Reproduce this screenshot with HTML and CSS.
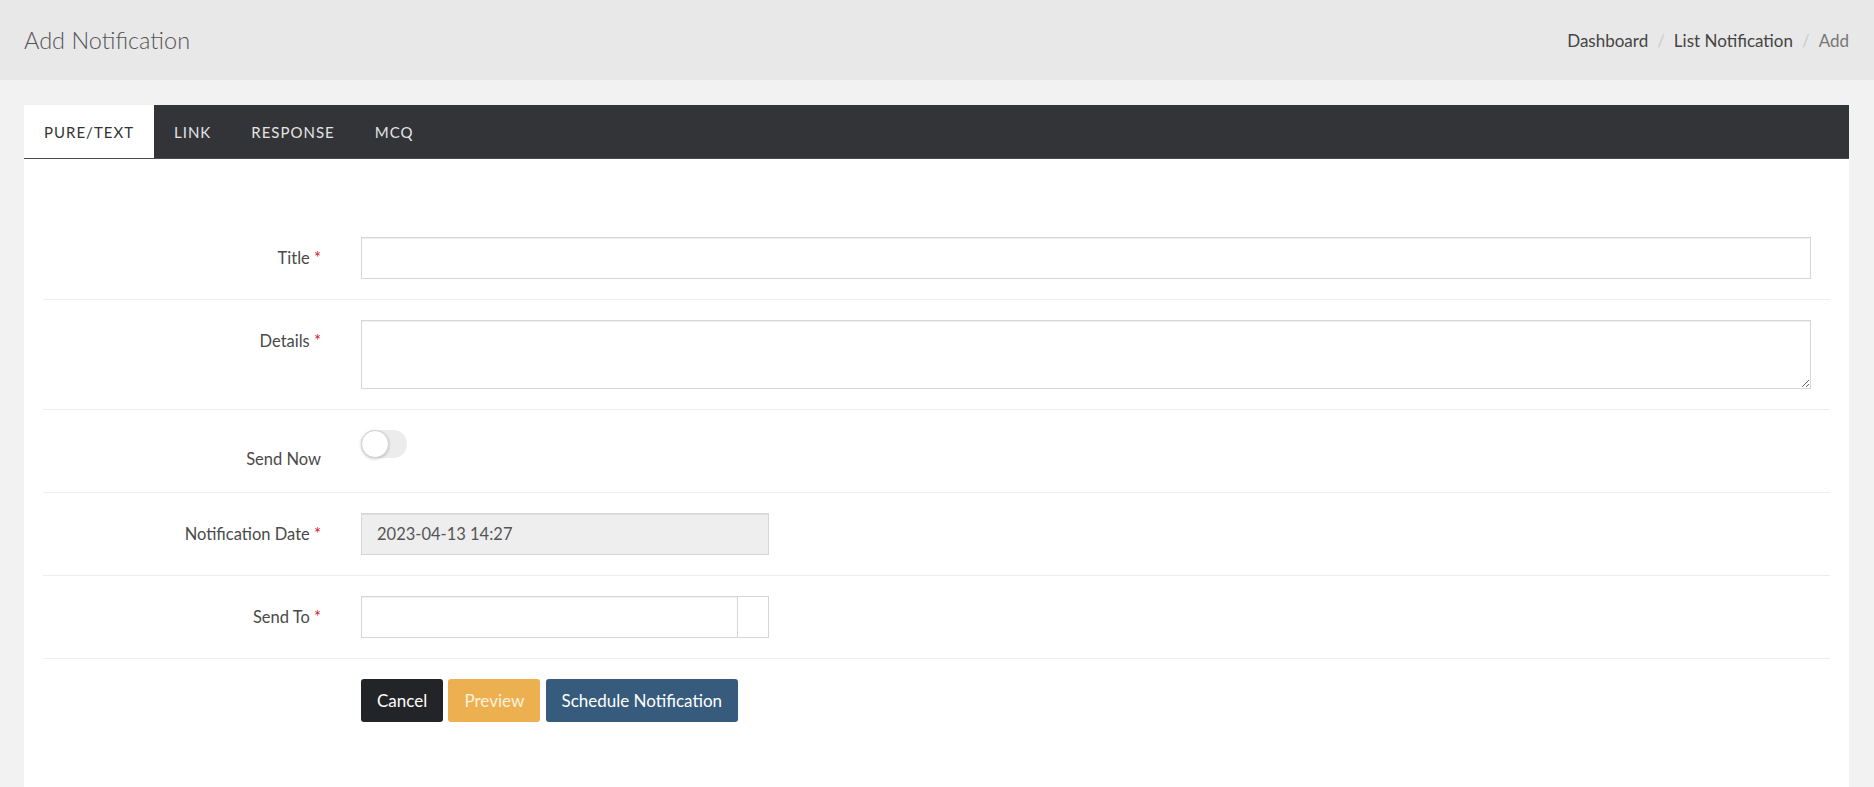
FILE: index.html
```html
<!DOCTYPE html>
<html lang="en">
<head>
<meta charset="UTF-8">
<meta name="viewport" content="width=device-width, initial-scale=1.0">
<title>Add Notification</title>
<link rel="stylesheet" href="styles.css">
</head>
<body>
<header class="page-head">
  <h1>Add Notification</h1>
  <ol class="crumbs">
    <li><a href="#">Dashboard</a></li>
    <li><a href="#">List Notification</a></li>
    <li class="current">Add</li>
  </ol>
</header>

<div class="panel">
  <ul class="tabs">
    <li class="active">Pure/Text</li>
    <li>Link</li>
    <li>Response</li>
    <li>MCQ</li>
  </ul>

  <form class="form">
    <div class="row">
      <label class="lbl">Title <span class="req">*</span></label>
      <div class="ctrl"><input type="text" class="field"></div>
    </div>
    <div class="row">
      <label class="lbl">Details <span class="req">*</span></label>
      <div class="ctrl"><textarea class="field area"></textarea></div>
    </div>
    <div class="row">
      <label class="lbl lbl-low">Send Now</label>
      <div class="ctrl"><span class="toggle"><span class="knob"></span></span></div>
    </div>
    <div class="row">
      <label class="lbl">Notification Date <span class="req">*</span></label>
      <div class="ctrl"><input type="text" class="field short readonly" value="2023-04-13 14:27" readonly></div>
    </div>
    <div class="row">
      <label class="lbl">Send To <span class="req">*</span></label>
      <div class="ctrl">
        <div class="group short">
          <input type="text" class="field">
          <span class="addon"></span>
        </div>
      </div>
    </div>
    <div class="row actions">
      <div class="lbl"></div>
      <div class="ctrl">
        <button type="button" class="btn btn-dark">Cancel</button>
        <button type="button" class="btn btn-warn">Preview</button>
        <button type="button" class="btn btn-blue">Schedule Notification</button>
      </div>
    </div>
  </form>
</div>
</body>
</html>
```

FILE: styles.css
```css
body { margin: 0; background: #f2f2f2; font-family: Lato, "Open Sans", sans-serif; color: #4a4a4a; font-size: 16.5px; }
a { color: inherit; text-decoration: none; }

.page-head { height: 80px; background: #e8e8e8; display: flex; align-items: center; justify-content: space-between; padding: 0 25px 0 24px; }
.page-head h1 { margin: 0; font-size: 23.5px; font-weight: 300; color: #555; }
.crumbs { list-style: none; margin: 0; padding: 0; display: flex; font-size: 17px; }
.crumbs li { color: #444; }
.crumbs li + li::before { content: "/"; color: #ccc; padding: 0 9px; }
.crumbs .current { color: #777; }

.panel { margin: 25px 25px 0 24px; background: #fff; min-height: 700px; }
.tabs { list-style: none; margin: 0; padding: 0; display: flex; height: 54px; background: #333438; border-bottom: 1px solid #4a4b50; box-sizing: border-box; }
.tabs li { padding: 0 20px; display: flex; align-items: center; font-size: 15px; letter-spacing: 1px; text-transform: uppercase; color: #e4e4e4; }
.tabs li.active { background: #fff; color: #333; }

.form { padding: 58px 19px 0; }
.row { display: grid; grid-template-columns: 278px 1fr; column-gap: 40px; padding: 20px 19px 20px 0; border-bottom: 1px solid #eeeeee; }
.row.actions { border-bottom: none; padding-top: 20px; }
.lbl { text-align: right; padding-top: 9px; line-height: 25px; color: #4a4a4a; }
.lbl-low { padding-top: 17px; }
.req { color: #d9232d; }

.field { display: block; box-sizing: border-box; width: 100%; height: 42px; margin: 0; padding: 0 15px; border: 1px solid #d6d6d6; border-radius: 0; box-shadow: inset 0 1px 1px rgba(0,0,0,.06); font-family: inherit; font-size: 16.5px; color: #555; background: #fff; }
.area { height: 69px; padding: 8px 15px; resize: vertical; }
.short { width: 408px; }
.readonly { background: #eeeeee; }

.group { display: flex; height: 42px; }
.group .field { flex: 1; border-right: none; }
.addon { width: 32px; border: 1px solid #d6d6d6; box-sizing: border-box; background: #fff; }

.toggle { display: block; position: relative; width: 46px; height: 28px; border-radius: 14px; background: #ececec; }
.knob { position: absolute; left: 0; top: 0; width: 26px; height: 26px; border-radius: 50%; background: #fff; border: 1px solid #d2d2d2; box-shadow: 0 1px 3px rgba(0,0,0,.2); }

.btn { height: 43px; padding: 0 16px; border: none; border-radius: 3px; font-family: inherit; font-size: 17px; color: #fff; cursor: pointer; margin-right: 1px; }
.btn-dark { background: #232427; }
.btn-warn { background: #edb050; color: #fdf2de; padding: 0 16px; }
.btn-blue { background: #365b7d; }
```
